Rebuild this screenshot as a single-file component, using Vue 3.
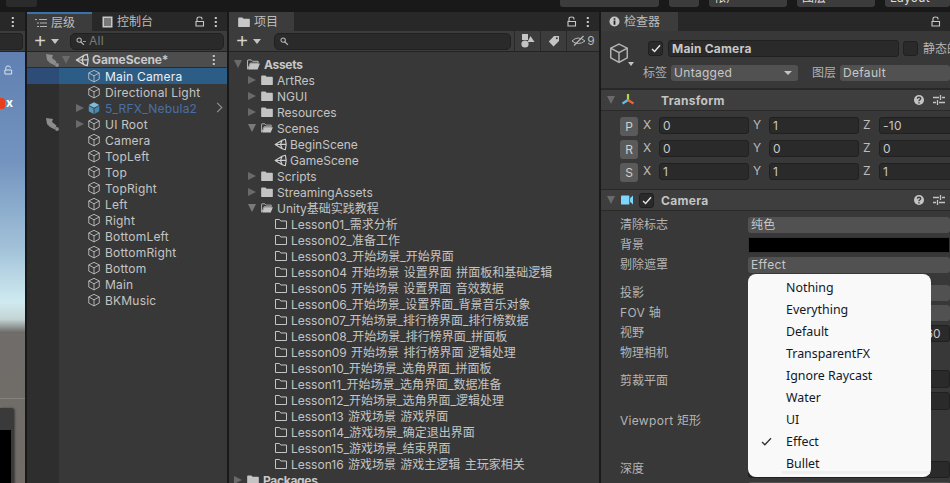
<script setup>
const hierarchy = [
  { name: 'Main Camera', selected: true },
  { name: 'Directional Light' },
  { name: '5_RFX_Nebula2', prefab: true, arrow: true, more: true },
  { name: 'UI Root', arrow: true, hidden: true },
  { name: 'Camera' },
  { name: 'TopLeft' },
  { name: 'Top' },
  { name: 'TopRight' },
  { name: 'Left' },
  { name: 'Right' },
  { name: 'BottomLeft' },
  { name: 'BottomRight' },
  { name: 'Bottom' },
  { name: 'Main' },
  { name: 'BKMusic' }
]

const lessons = [
  'Lesson01_需求分析',
  'Lesson02_准备工作',
  'Lesson03_开始场景_开始界面',
  'Lesson04 开始场景 设置界面 拼面板和基础逻辑',
  'Lesson05 开始场景 设置界面 音效数据',
  'Lesson06_开始场景_设置界面_背景音乐对象',
  'Lesson07_开始场景_排行榜界面_排行榜数据',
  'Lesson08_开始场景_排行榜界面_拼面板',
  'Lesson09 开始场景 排行榜界面 逻辑处理',
  'Lesson10_开始场景_选角界面_拼面板',
  'Lesson11_开始场景_选角界面_数据准备',
  'Lesson12_开始场景_选角界面_逻辑处理',
  'Lesson13 游戏场景 游戏界面',
  'Lesson14_游戏场景_确定退出界面',
  'Lesson15_游戏场景_结束界面',
  'Lesson16 游戏场景 游戏主逻辑 主玩家相关'
]

const transformRows = [
  { key: 'P', x: '0', y: '1', z: '-10' },
  { key: 'R', x: '0', y: '0', z: '0' },
  { key: 'S', x: '1', y: '1', z: '1' }
]

const cameraRows = [
  { label: '清除标志', kind: 'drop', value: '纯色' },
  { label: '背景', kind: 'color' },
  { label: '剔除遮罩', kind: 'drop', value: 'Effect' },
  { label: '投影', kind: 'drop', gap: 8 },
  { label: 'FOV 轴', kind: 'drop' },
  { label: '视野', kind: 'num', value: '60' },
  { label: '物理相机', kind: 'none' },
  { label: '剪裁平面', kind: 'clip', gap: 8, height: 40 },
  { label: 'Viewport 矩形', kind: 'none', height: 48 },
  { label: '深度', kind: 'num' },
  { label: '', kind: 'drop', gap: 1 }
]

const layers = ['Nothing', 'Everything', 'Default', 'TransparentFX', 'Ignore Raycast', 'Water', 'UI', 'Effect', 'Bullet']

// 中文不加字距，只有拉丁字母加
const parts = (text) => text.split(/([\u4e00-\u9fff]+)/)
</script>

<template>
  <div class="editor">
    <svg class="defs" width="0" height="0">
      <symbol id="cube" viewBox="0 0 16 16">
        <path d="M8 1.5 14 4.5V11.5L8 14.8 2 11.5V4.5ZM2 4.5 8 7.8 14 4.5M8 7.8V14.8" fill="none" stroke="currentColor" stroke-width="1.05" />
      </symbol>
      <symbol id="cube-blue" viewBox="0 0 16 16">
        <path d="M8 1.5 14 4.5 8 7.8 2 4.5Z" fill="#7fbcdc" />
        <path d="M2 5.5 7.5 8.6V14.8L2 11.7Z" fill="#5496bb" />
        <path d="M14 5.5 8.5 8.6V14.8L14 11.7Z" fill="#4586aa" />
      </symbol>
      <symbol id="unity" viewBox="0 0 16 16">
        <path d="M1.5 8 10 2.8 14 1.5 15 7.5 14 14.5 10 13.2ZM1.5 8H8L10 2.8M8 8 10 13.2M8 8 15 7.5" fill="none" stroke="currentColor" stroke-width="1.4" stroke-linejoin="round" />
      </symbol>
      <symbol id="folder" viewBox="0 0 14 12">
        <path d="M0 1.5Q0 .5 1 .5H5L6.5 2H13Q14 2 14 3V11Q14 12 13 12H1Q0 12 0 11Z" fill="currentColor" />
      </symbol>
      <symbol id="folder-open" viewBox="0 0 14 12">
        <path d="M.5 11V1.5Q.5 1 1 1H4.5L6 2.5H12V4.5H3.5L.8 11Z" fill="none" stroke="currentColor" />
        <path d="M3.8 5H14L11.5 11.5H1.2Z" fill="currentColor" />
      </symbol>
      <symbol id="folder-line" viewBox="0 0 12 10">
        <path d="M.5 9.5V.5H4.5L5.7 2H11.5V9.5Z" fill="none" stroke="currentColor" />
      </symbol>
      <symbol id="lock" viewBox="0 0 10 11">
        <path d="M2 5V2.8Q2 1 4.5 1 7 1 7 2.8V3.4M1 5.5H8.5V10H1Z" fill="none" stroke="currentColor" stroke-width="1.1" />
      </symbol>
      <symbol id="kebab" viewBox="0 0 4 12">
        <path d="M.8 1h2v2h-2zM.8 5h2v2h-2zM.8 9h2v2h-2z" fill="currentColor" />
      </symbol>
      <symbol id="sliders" viewBox="0 0 12 12">
        <path d="M0 3.5H6M9 3.5H12M0 8.5H3M6 8.5H12M7.5 1V6M4.5 6V11" fill="none" stroke="currentColor" stroke-width="1.3" />
      </symbol>
      <symbol id="help" viewBox="0 0 12 12">
        <circle cx="6" cy="6" r="5" fill="currentColor" />
        <path d="M4.3 4.7Q4.4 3.2 6 3.2 7.7 3.2 7.7 4.6 7.7 5.4 6.8 5.9 6 6.3 6 7.2M6 8.2V9.4" fill="none" stroke="#3e3e3e" stroke-width="1.4" />
      </symbol>
      <symbol id="search" viewBox="0 0 10 10">
        <circle cx="3.5" cy="3.5" r="2.4" fill="none" stroke="currentColor" stroke-width="1.2" />
        <path d="M5.2 5.2 8.8 8.8" stroke="currentColor" stroke-width="1.4" />
      </symbol>
      <symbol id="scene-eye" viewBox="0 0 13 13">
        <path d="M0 0 7 1 6 4 10.5 7.5 9 11.5 4 9 1 6Z" fill="currentColor" />
        <circle cx="11" cy="11" r="1.9" fill="currentColor" />
      </symbol>
    </svg>

    <header class="topbar">
      <div class="top-left"><span class="top-btn first"></span></div>
      <div class="top-right">
        <span class="top-btn account"></span>
        <span class="top-btn cloud"></span>
        <span class="top-btn wide"><i>帐户</i></span>
        <span class="top-btn wide"><i>图层</i></span>
        <span class="top-btn layout"><i>Layout</i></span>
      </div>
    </header>

    <main class="panels">
      <!-- 场景 -->
      <section class="panel scene-panel">
        <div class="tabbar scene-tabs">
          <svg class="icon kebab"><use href="#kebab" /></svg>
        </div>
        <div class="toolbar scene-tools"><span class="scene-box"></span></div>
        <div class="scene-view">
          <svg class="scene-lock"><use href="#lock" /></svg>
          <span class="gizmo"></span>
          <b class="gizmo-x">x</b>
          <span class="ground-line"></span>
          <div class="game-window"><div class="game-black"></div></div>
        </div>
      </section>

      <!-- 层级 -->
      <section class="panel">
        <div class="tabbar">
          <div class="tab tab-active hier-tab">
            <svg class="tab-icon list-icon" viewBox="0 0 12 10"><path d="M0 1h2v1H0zM4 1h8v1H4zM2 4.5h2v1H2zM5 4.5h7v1H5zM2 8h2v1H2zM5 8h7v1H5z" fill="#b4b4b4" /></svg>
            <span>层级</span>
          </div>
          <div class="tab console-tab">
            <svg class="tab-icon console-icon" viewBox="0 0 11 12"><path d="M.5.5h10v11H.5z" fill="#c8c8c8" /><path d="M2 3h7M2 5h7M2 7h7M2 9h7" stroke="#282828" /></svg>
            <span>控制台</span>
          </div>
          <div class="tab-tools">
            <svg class="icon lock"><use href="#lock" /></svg>
            <svg class="icon kebab"><use href="#kebab" /></svg>
          </div>
        </div>
        <div class="toolbar">
          <span class="plus">+</span>
          <span class="tri-down small"></span>
          <div class="search hier-search">
            <svg class="search-icon"><use href="#search" /></svg>
            <span class="search-dash"></span>
            <span class="placeholder">All</span>
          </div>
        </div>
        <div class="hier-body">
          <div class="hier-strip"></div>
          <div class="hier-list">
            <div class="scene-row">
              <svg class="strip-eye"><use href="#scene-eye" /></svg>
              <span class="tri-down big"></span>
              <svg class="unity-icon"><use href="#unity" /></svg>
              <b>GameScene*</b>
              <svg class="icon kebab scene-kebab"><use href="#kebab" /></svg>
            </div>
            <div
              v-for="row in hierarchy"
              :key="row.name"
              class="hier-row"
              :class="{ selected: row.selected, prefab: row.prefab }"
            >
              <svg v-if="row.hidden" class="strip-eye"><use href="#scene-eye" /></svg>
              <span v-if="row.arrow" class="tri-right"></span>
              <svg class="cube"><use :href="row.prefab ? '#cube-blue' : '#cube'" /></svg>
              <span class="row-name">{{ row.name }}</span>
              <span v-if="row.more" class="chevron"></span>
            </div>
          </div>
        </div>
      </section>

      <!-- 项目 -->
      <section class="panel">
        <div class="tabbar">
          <div class="tab tab-active project-tab">
            <svg class="tab-icon folder-tab"><use href="#folder" /></svg>
            <span>项目</span>
          </div>
          <div class="tab-tools">
            <svg class="icon lock"><use href="#lock" /></svg>
            <svg class="icon kebab"><use href="#kebab" /></svg>
          </div>
        </div>
        <div class="toolbar project-tools">
          <span class="plus">+</span>
          <span class="tri-down small"></span>
          <div class="search project-search">
            <svg class="search-icon"><use href="#search" /></svg>
          </div>
          <div class="tool-btn">
            <svg width="14" height="14" viewBox="0 0 14 14"><rect x="1" y="0" width="6" height="6" fill="#c4c4c4" /><circle cx="4" cy="10" r="3.6" fill="#c4c4c4" /><path d="M9.5 2 13.5 8H6.5Z" fill="#c4c4c4" /></svg>
          </div>
          <div class="tool-btn">
            <svg width="12" height="12" viewBox="0 0 12 12"><path d="M6 1H11V6L5.5 11.5.8 6.6Z" fill="#c4c4c4" /><circle cx="8.8" cy="3.2" r="1" fill="#383838" /></svg>
          </div>
          <div class="tool-btn eye-btn">
            <svg width="15" height="12" viewBox="0 0 15 12"><path d="M1 6Q7 0 14 6 7 11 1 6Z" fill="none" stroke="#b8b8b8" /><path d="M3 10.5 12.5 1" stroke="#b8b8b8" stroke-width="1.2" /></svg>
            <span>9</span>
          </div>
        </div>
        <div class="tree">
          <div class="tree-row lv0">
            <span class="tri-down big"></span>
            <svg class="folder-open root-folder"><use href="#folder-open" /></svg>
            <b>Assets</b>
          </div>
          <div v-for="name in ['ArtRes', 'NGUI', 'Resources']" :key="name" class="tree-row lv1">
            <span class="tri-right"></span>
            <svg class="folder"><use href="#folder" /></svg>
            <span>{{ name }}</span>
          </div>
          <div class="tree-row lv1">
            <span class="tri-down mid"></span>
            <svg class="folder-open"><use href="#folder-open" /></svg>
            <span>Scenes</span>
          </div>
          <div v-for="name in ['BeginScene', 'GameScene']" :key="name" class="tree-row lv2">
            <svg class="scene-file"><use href="#unity" /></svg>
            <span>{{ name }}</span>
          </div>
          <div v-for="name in ['Scripts', 'StreamingAssets']" :key="name" class="tree-row lv1">
            <span class="tri-right"></span>
            <svg class="folder"><use href="#folder" /></svg>
            <span>{{ name }}</span>
          </div>
          <div class="tree-row lv1">
            <span class="tri-down mid"></span>
            <svg class="folder-open"><use href="#folder-open" /></svg>
            <span>Unity基础实践教程</span>
          </div>
          <div v-for="name in lessons" :key="name" class="tree-row lv2 lesson">
            <svg class="folder-line"><use href="#folder-line" /></svg>
            <span>{{ name }}</span>
          </div>
          <div class="tree-row lv0">
            <span class="tri-right"></span>
            <svg class="folder"><use href="#folder" /></svg>
            <b>Packages</b>
          </div>
        </div>
      </section>

      <!-- 检查器 -->
      <section class="panel inspector">
        <div class="tabbar">
          <div class="tab tab-active inspector-tab">
            <svg class="tab-icon info-icon" viewBox="0 0 11 11"><circle cx="5.5" cy="5.5" r="5" fill="#c8c8c8" /><path d="M4.6 2.2h1.8v1.6H4.6zM4.6 4.6h1.8v4.2H4.6z" fill="#282828" /></svg>
            <span class="cjk">检查器</span>
          </div>
          <div class="tab-tools">
            <svg class="icon lock"><use href="#lock" /></svg>
          </div>
        </div>

        <div class="object-head">
          <div class="object-icon">
            <svg class="big-cube"><use href="#cube" /></svg>
            <span class="tri-down tiny"></span>
          </div>
          <div class="object-fields">
            <div class="name-row">
              <span class="check on">
                <svg width="10" height="9" viewBox="0 0 10 9"><path d="M1 5 3.6 7.5 9 1.2" fill="none" stroke="#e6e6e6" stroke-width="1.4" /></svg>
              </span>
              <b class="name-input">Main Camera</b>
              <span class="check"></span>
              <span class="static-label cjk">静态的</span>
            </div>
            <div class="tag-row">
              <span class="tag-label">标签</span>
              <div class="drop tag-drop"><span>Untagged</span><span class="tri-down drop-arrow"></span></div>
              <span class="tag-label layer-label">图层</span>
              <div class="drop layer-drop"><span>Default</span></div>
            </div>
          </div>
        </div>

        <div class="comp-head">
          <span class="tri-down big"></span>
          <svg class="comp-icon" viewBox="0 0 14 14">
            <path d="M7 7V1" stroke="#a8d94a" stroke-width="2.2" />
            <path d="M7 7 1.5 10.5" stroke="#5bc0ea" stroke-width="2.2" />
            <path d="M7 7 12.5 10.5" stroke="#e8643c" stroke-width="2.2" />
          </svg>
          <b class="comp-title">Transform</b>
          <svg class="help"><use href="#help" /></svg>
          <svg class="sliders"><use href="#sliders" /></svg>
        </div>
        <div class="transform">
          <div v-for="row in transformRows" :key="row.key" class="tf-row">
            <span class="tf-key">{{ row.key }}</span>
            <span class="axis">X</span><span class="num">{{ row.x }}</span>
            <span class="axis">Y</span><span class="num">{{ row.y }}</span>
            <span class="axis">Z</span><span class="num">{{ row.z }}</span>
          </div>
        </div>

        <div class="comp-head">
          <span class="tri-down big"></span>
          <svg class="cam-icon" viewBox="0 0 13 10"><rect x="0" y="0" width="9" height="10" rx="1" fill="#7fd6fc" /><path d="M9.8 3 13 0V10L9.8 7Z" fill="#7fd6fc" /></svg>
          <span class="check on comp-check">
            <svg width="10" height="9" viewBox="0 0 10 9"><path d="M1 5 3.6 7.5 9 1.2" fill="none" stroke="#e6e6e6" stroke-width="1.4" /></svg>
          </span>
          <b class="comp-title">Camera</b>
          <svg class="help"><use href="#help" /></svg>
          <svg class="sliders"><use href="#sliders" /></svg>
        </div>
        <div class="camera">
          <div
            v-for="row in cameraRows"
            :key="row.label"
            class="cam-row"
            :style="{ marginTop: (row.gap || 0) + 'px', height: (row.height || 20) + 'px' }"
          >
            <span class="cam-label"><span v-for="(part, i) in parts(row.label)" :key="i" :class="{ cjk: i % 2 }">{{ part }}</span></span>
            <div v-if="row.kind === 'drop'" class="drop cam-field">{{ row.value }}</div>
            <div v-else-if="row.kind === 'color'" class="cam-color"></div>
            <div v-else-if="row.kind === 'num'" class="num cam-field cam-num">{{ row.value }}</div>
            <div v-else-if="row.kind === 'clip'" class="clip-fields">
              <div class="num cam-field"></div>
              <div class="num cam-field"></div>
            </div>
          </div>
        </div>

        <!-- 剔除遮罩下拉菜单 -->
        <ul class="popup">
          <li v-for="layer in layers" :key="layer">
            <svg v-if="layer === 'Effect'" class="popup-check" viewBox="0 0 12 10"><path d="M1 5.5 4.2 8.6 11 1.4" fill="none" stroke="#333" stroke-width="1.5" /></svg>
            {{ layer }}
          </li>
          <span class="popup-scroll"></span>
        </ul>
      </section>
    </main>
  </div>
</template>

<style>
html, body { margin: 0; background: #191919; }
</style>

<style scoped>
.editor {
  width: 950px;
  height: 483px;
  overflow: hidden;
  background: #191919;
  color: #c4c4c4;
  font: 12px/16px Inter, "Noto Sans CJK SC", sans-serif;
  letter-spacing: .3px;
  display: flex;
  flex-direction: column;
}
b { font-weight: 700; }
.cjk { letter-spacing: 0; }
.defs { position: absolute; }

.topbar { height: 12px; flex: none; display: flex; justify-content: space-between; }
.top-left { padding-left: 6px; }
.top-right { display: flex; gap: 10px; }
.top-btn { display: block; height: 7px; background: #3c3c3c; border-radius: 0 0 3px 3px; overflow: hidden; }
.top-btn i { display: block; font-style: normal; margin: -10px 0 0 5px; color: #ddd; }
.first { width: 31px; background: #2b2b2b; }
.account { width: 99px; }
.cloud { width: 30px; }
.wide { width: 78px; }
.layout { width: 65px; }

.panels { flex: 1; display: grid; grid-template-columns: 25px 200px 370px 1fr; column-gap: 2px; min-height: 0; }
.panel { position: relative; background: #383838; display: flex; flex-direction: column; min-width: 0; overflow: hidden; }
.tabbar { height: 19px; flex: none; background: #282828; display: flex; box-sizing: border-box; }
.tab { display: flex; align-items: center; gap: 4px; padding: 0 8px; height: 19px; color: #bdbdbd; letter-spacing: 0; box-sizing: border-box; }
.tab-active { background: #3c3c3c; }
.hier-tab { border-top: 2px solid #3a72b0; width: 65px; }
.console-tab { padding-left: 10px; }
.project-tab { width: 65px; padding-left: 9px; }
.inspector-tab { width: 77px; }
.tab-icon { flex: none; }
.list-icon { width: 12px; height: 10px; }
.console-icon { width: 11px; height: 12px; }
.folder-tab { width: 12px; height: 10px; color: #c8c8c8; }
.info-icon { width: 11px; height: 11px; }
.tab-tools { margin-left: auto; display: flex; align-items: center; gap: 9px; padding-right: 9px; }
.icon { display: block; color: #c8c8c8; }
.lock { width: 10px; height: 11px; }
.kebab { width: 4px; height: 12px; }
.scene-tabs { justify-content: center; align-items: center; }

.toolbar { height: 20px; flex: none; display: flex; align-items: center; background: #3c3c3c; border-bottom: 1px solid #232323; padding-left: 7px; }
.scene-tools { padding-left: 0; }
.scene-box { width: 22px; height: 15px; background: #2a2a2a; border-radius: 0 4px 4px 0; border: 1px solid #212121; border-left: 0; }
.plus { width: 12px; font: 20px/20px "Liberation Sans", sans-serif; color: #d4d4d4; text-align: center; letter-spacing: 0; }
.search { height: 15px; background: #2a2a2a; border: 1px solid #212121; border-radius: 5px; display: flex; align-items: center; padding-left: 5px; }
.hier-search { margin-left: 11px; width: 147px; }
.project-search { margin-left: 13px; width: 230px; }
.search-icon { width: 9px; height: 9px; color: #b4b4b4; }
.search-dash { width: 3px; height: 1px; background: #999; margin-left: -2px; }
.placeholder { color: #7b7b7b; margin-left: 3px; }
.tool-btn { width: 25px; height: 20px; border-left: 1px solid #2a2a2a; display: flex; align-items: center; justify-content: center; gap: 1px; }
.project-search + .tool-btn { margin-left: 3px; }
.eye-btn { width: 32px; }
.eye-btn span { color: #b8b8b8; letter-spacing: 0; }

.tri-down { display: inline-block; width: 0; height: 0; flex: none; border-style: solid; border-color: #a0a0a0 transparent transparent; }
.tri-down.small { border-width: 5px 4px 0; margin-left: 5px; border-top-color: #c4c4c4; }
.tri-down.big { border-width: 8px 4.5px 0; border-top-color: #6a6a6a; }
.tri-down.mid { border-width: 8px 4.5px 0; border-top-color: #7a7a7a; }
.tri-down.tiny { border-width: 4px 3.5px 0; border-top-color: #c4c4c4; }
.tri-right { display: inline-block; width: 0; height: 0; flex: none; border-style: solid; border-width: 4.5px 0 4.5px 8px; border-color: transparent transparent transparent #6a6a6a; }

.hier-body { flex: 1; display: flex; position: relative; }
.hier-strip { position: absolute; left: 0; top: 0; bottom: 0; width: 32px; background: #2e2e2e; }
.hier-list { position: relative; flex: 1; }
.scene-row { height: 14px; padding-top: 1px; display: flex; align-items: center; padding-left: 35px; background: #4d4d4d; position: relative; border-bottom: 1px solid #2a2a2a; }
.scene-row b { color: #c8c8c8; margin-left: 3px; letter-spacing: -.1px; }
.unity-icon { width: 14px; height: 14px; margin-left: 5px; color: #d2d2d2; }
.scene-kebab { margin-left: auto; margin-right: 11px; }
.strip-eye { position: absolute; left: 19px; top: 2px; width: 13px; height: 13px; color: #8c8c8c; }
.hier-row { height: 16px; display: flex; align-items: center; position: relative; padding-left: 60px; letter-spacing: .2px; }
.hier-row .cube { width: 14px; height: 14px; margin-right: 4px; color: #bcbcbc; }
.row-name { padding-top: 2px; }
.hier-row.selected { background: #2c5d87; color: #eee; }
.hier-row.selected::before { content: ""; position: absolute; left: 0; top: 0; width: 32px; height: 16px; background: #2d4d78; }
.hier-row.selected > * { position: relative; }
.hier-row.prefab .row-name { color: #4a6fa8; }
.hier-row .tri-right { position: absolute; left: 49px; top: 3.5px; }
.chevron { position: absolute; right: 6px; top: 4px; width: 6px; height: 6px; border: solid #9a9a9a; border-width: 1.5px 1.5px 0 0; transform: rotate(45deg); }

.tree { flex: 1; padding-top: 4px; overflow: hidden; letter-spacing: 0; }
.tree-row { height: 16px; display: flex; align-items: center; white-space: nowrap; }
.tree-row > :last-child { padding-top: 2px; }
.lv0 { padding-left: 5px; }
.lv1 { padding-left: 19px; }
.lv2 { padding-left: 46px; }
.lesson { word-spacing: 1px; }
.tree-row .tri-right,
.tree-row .tri-down { margin-right: 5px; }
.folder, .folder-open { width: 12px; height: 10px; color: #c4c4c4; margin-right: 4px; }
.root-folder { width: 13px; height: 11px; }
.lv0 b { color: #c8c8c8; letter-spacing: -.3px; }
.folder-line { width: 12px; height: 10px; color: #c4c4c4; margin-right: 4px; }
.scene-file { width: 13px; height: 13px; color: #cfcfcf; margin-right: 3px; margin-left: -1px; }

.object-head { height: 59px; flex: none; display: flex; padding-top: 9px; box-sizing: border-box; border-bottom: 2px solid #282828; }
.object-icon { width: 47px; position: relative; flex: none; }
.big-cube { width: 22px; height: 24px; margin: 1px 0 0 7px; color: #b4b4b4; display: block; }
.object-icon .tri-down { position: absolute; left: 27px; top: 22px; }
.object-fields { flex: 1; min-width: 0; }
.name-row { display: flex; align-items: center; height: 17px; }
.check { width: 13px; height: 13px; background: #2a2a2a; border: 1px solid #202020; border-radius: 3px; display: flex; align-items: center; justify-content: center; flex: none; }
.name-input { flex: none; width: 231px; height: 17px; background: #2a2a2a; border: 1px solid #202020; border-radius: 3px; margin: 0 4px 0 5px; padding-left: 3px; box-sizing: border-box; color: #c8c8c8; line-height: 15px; letter-spacing: .2px; }
.static-label { margin-left: 5px; white-space: nowrap; color: #b4b4b4; }
.tag-row { display: flex; align-items: center; height: 16px; margin-top: 8px; margin-left: -5px; }
.tag-label { white-space: nowrap; color: #b0b0b0; letter-spacing: 0; margin-right: 4px; }
.drop { height: 16px; background: #515151; border-radius: 3px; padding-left: 3px; box-sizing: border-box; display: flex; align-items: center; justify-content: space-between; color: #c8c8c8; }
.tag-drop { width: 127px; padding-right: 6px; }
.drop-arrow { border-width: 4px 4px 0; border-top-color: #c4c4c4; }
.layer-label { margin-left: 14px; }
.layer-drop { flex: 1; }

.comp-head { height: 20px; flex: none; display: flex; align-items: center; background: #3e3e3e; border-bottom: 1px solid #2a2a2a; padding-left: 6px; position: relative; }
.comp-icon { width: 14px; height: 14px; margin-left: 6px; }
.comp-title { position: absolute; left: 60px; top: 3px; color: #c4c4c4; }
.comp-check { margin-left: 6px; }
.cam-icon { width: 12px; height: 10px; margin-left: 6px; }
.help { width: 12px; height: 12px; position: absolute; right: 25px; color: #c4c4c4; top: 4px; }
.sliders { width: 12px; height: 12px; position: absolute; right: 5px; color: #c4c4c4; top: 4px; }
.transform { height: 79px; flex: none; padding-top: 6px; box-sizing: border-box; border-bottom: 1px solid #282828; }
.tf-row { display: flex; align-items: flex-start; height: 23px; padding-left: 19px; }
.tf-key { width: 18px; height: 19px; background: #5a5a5a; border-radius: 3px; text-align: center; line-height: 19px; margin-right: 5px; flex: none; color: #d0d0d0; letter-spacing: 0; }
.axis { width: 16px; flex: none; color: #bcbcbc; letter-spacing: 0; }
.num { background: #2a2a2a; border: 1px solid #202020; border-radius: 3px; height: 17px; line-height: 15px; box-sizing: border-box; padding-left: 3px; color: #c8c8c8; flex: none; width: 90px; margin-right: 4px; }
.tf-row .num:last-child { width: 80px; margin: 0; }

.camera { padding-top: 6px; }
.cam-row { display: flex; align-items: flex-start; padding-left: 19px; }
.cam-label { width: 128px; flex: none; color: #b4b4b4; white-space: nowrap; }
.cam-field { flex: 1; margin: 0; width: auto; min-width: 0; }
.cam-color { flex: 1; height: 16px; background: #000; border: 1px solid #333; box-sizing: border-box; }
.cam-num { text-align: right; padding-right: 8px; }
.clip-fields { flex: 1; display: flex; flex-direction: column; gap: 4px; margin-top: -3px; }
.clip-fields .cam-field { flex: none; height: 18px; }

.popup {
  position: absolute;
  left: 147px;
  top: 262px;
  width: 183px;
  margin: 0;
  padding: 3px 0 2px;
  list-style: none;
  background: #f9f9f9;
  border-radius: 8px;
  box-sizing: border-box;
  color: #101828;
  font: 12.4px/22px "Noto Sans", "Open Sans", sans-serif;
  letter-spacing: 0;
}
.popup li { height: 22px; padding-left: 38px; position: relative; }
.popup-check { position: absolute; left: 13px; top: 6px; width: 11px; height: 9px; }
.popup-scroll { position: absolute; left: 34px; right: 1px; bottom: 3px; height: 3px; background: #efefef; }

.scene-panel { background: #6f6a66; }
.scene-view {
  flex: 1;
  position: relative;
  background: linear-gradient(#5f80b1 0, #7393bf 25%, #a0c0d8 45%, #cfeaf0 58%, #c4d4d4 62%, #6f6d6a 65%, #726b66 100%);
}
.scene-lock { position: absolute; left: 4px; top: 13px; width: 9px; height: 10px; color: #dfe7ef; }
.gizmo { position: absolute; left: 0; top: 46px; width: 5px; height: 11px; background: #e8401c; border-radius: 0 3px 3px 0; }
.gizmo-x { position: absolute; left: 6px; top: 43px; color: #fff; letter-spacing: 0; }
.ground-line { position: absolute; left: 0; right: 0; top: 346px; height: 1px; background: #87827e; }
.game-window { position: absolute; left: 0; top: 356px; width: 14px; height: 80px; background: #3a3a3a; border-radius: 0 3px 0 0; box-shadow: 1px 0 2px #0006; }
.game-black { margin-top: 22px; width: 11px; height: 60px; background: #000; }
</style>
